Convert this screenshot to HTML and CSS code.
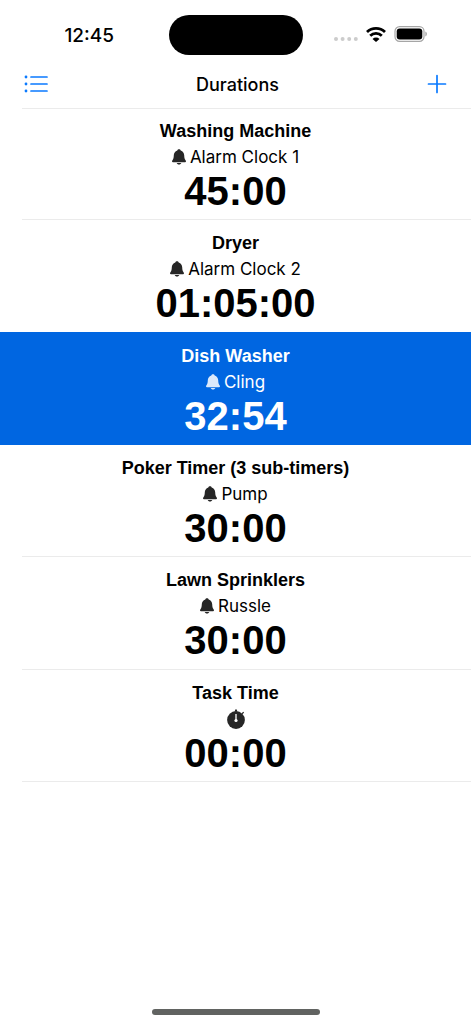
FILE: index.html
```html
<!DOCTYPE html>
<html lang="en">
<head>
<meta charset="utf-8">
<meta name="viewport" content="width=device-width, initial-scale=1">
<title>Durations</title>
<link rel="stylesheet" href="styles.css">
</head>
<body>
<svg class="sprite" aria-hidden="true">
  <symbol id="bell" viewBox="0 0 14 16">
    <path d="M7 .2c.8 0 1.500.5 1.700 1.200C11 2.200 12.100 4 12.200 6.300c.1 2.700.4 3.800 1.300 4.900.3.4.5.8.5 1.100 0 .6-.4.900-1 .9H1c-.6 0-1-.3-1-.9 0-.3.2-.7.500-1.100.9-1.100 1.200-2.200 1.300-4.900C1.900 4 3 2.200 5.300 1.400 5.500.7 6.200.2 7 .2zM4.700 14.100h4.600c-.2.900-1.200 1.500-2.300 1.500s-2.100-.6-2.300-1.500z"/>
  </symbol>
</svg>
<div class="screen">
  <div class="status">
    <time class="clock">12:45</time>
    <div class="island"></div>
    <div class="indicators">
      <svg class="signal" viewBox="0 0 24 4" aria-hidden="true"><circle cx="2" cy="2" r="2"/><circle cx="8.600" cy="2" r="2"/><circle cx="15.200" cy="2" r="2"/><circle cx="21.800" cy="2" r="2"/></svg>
      <svg class="wifi" viewBox="0 0 20 15" aria-hidden="true"><path class="wave" d="M1 5.100a12.900 12.900 0 0 1 18 0M4.200 8.700a8.300 8.300 0 0 1 11.600 0"/><path d="M6.500 11.900a5.100 5.100 0 0 1 7 0L10 15z"/></svg>
      <svg class="battery" viewBox="0 0 34 16" aria-hidden="true"><rect class="case" x="1" y=".7" width="29" height="14.600" rx="4.600"/><rect x="2.700" y="2.400" width="25.600" height="11.200" rx="3"/><path class="tip" d="M31.300 5.600c1 .4 1.600 1.300 1.600 2.400s-.6 2-1.600 2.400z"/></svg>
    </div>
  </div>
  <header class="navbar">
    <button class="icon-button" type="button" aria-label="List">
      <svg class="list-icon" viewBox="0 0 24 18"><g class="dots"><circle cx="2" cy="2" r="1.400"/><circle cx="2" cy="9" r="1.400"/><circle cx="2" cy="16" r="1.400"/></g><path d="M7 2h16M7 9h16M7 16h16"/></svg>
    </button>
    <h1 class="heading">Durations</h1>
    <button class="icon-button" type="button" aria-label="Add">
      <svg class="plus-icon" viewBox="0 0 20 20"><path d="M10 1.500v17M1.500 10h17"/></svg>
    </button>
  </header>
  <main>
    <ul class="timers">
      <li><button class="timer" type="button"><span class="name">Washing Machine</span><span class="sound"><svg class="bell"><use href="#bell"/></svg>Alarm Clock 1</span><span class="duration">45:00</span></button></li>
      <li><button class="timer" type="button"><span class="name">Dryer</span><span class="sound"><svg class="bell"><use href="#bell"/></svg>Alarm Clock 2</span><span class="duration">01:05:00</span></button></li>
      <li class="selected"><button class="timer" type="button" aria-pressed="true"><span class="name">Dish Washer</span><span class="sound"><svg class="bell"><use href="#bell"/></svg>Cling</span><span class="duration">32:54</span></button></li>
      <li><button class="timer" type="button"><span class="name">Poker Timer (3 sub-timers)</span><span class="sound"><svg class="bell"><use href="#bell"/></svg>Pump</span><span class="duration">30:00</span></button></li>
      <li><button class="timer" type="button"><span class="name">Lawn Sprinklers</span><span class="sound"><svg class="bell"><use href="#bell"/></svg>Russle</span><span class="duration">30:00</span></button></li>
      <li><button class="timer" type="button"><span class="name">Task Time</span><span class="sound"><svg class="stopwatch" viewBox="0 0 18 20" aria-label="Stopwatch"><circle cx="9" cy="11" r="8.900"/><path d="M8.200.4h1.600l.5 2.100H7.700zM14.700 4.200l1.500-1.500.9.900-1.500 1.600z"/><path class="hand" d="M9 5v6"/><circle class="hub" cx="9" cy="11.500" r="1.600"/></svg></span><span class="duration">00:00</span></button></li>
    </ul>
  </main>
  <div class="home-indicator"></div>
</div>
</body>
</html>
```

FILE: styles.css
```css
* { box-sizing: border-box; }

body {
  margin: 0;
  background: #fff;
  color: #000;
  font-family: Inter, "Liberation Sans", sans-serif;
}

.sprite { display: none; }

.screen {
  display: flex;
  flex-direction: column;
  min-height: 100vh;
}

.status {
  display: grid;
  grid-template-columns: 1fr 134px 1fr;
  align-items: center;
  height: 60px;
  padding-top: 10px;
}

.clock {
  padding-left: 10px;
  font-size: 19px;
  font-weight: 500;
  text-align: center;
}

.island {
  height: 40px;
  border-radius: 20px;
  background: #000;
}

.indicators {
  display: flex;
  align-items: center;
  justify-content: center;
  gap: 8px;
  padding: 0 12px 2px 0;
}

.signal { width: 24px; height: 4px; margin-top: 10px; fill: #ccc; }
.wifi { width: 20px; height: 15px; }
.wave { fill: none; stroke: #000; stroke-width: 2.8; }
.battery { width: 34px; height: 16px; }
.case { fill: none; stroke: #a6a6a6; stroke-width: 1.2; }
.tip { fill: #a6a6a6; }

.navbar {
  display: flex;
  align-items: center;
  justify-content: space-between;
  height: 48px;
  padding: 0 24px;
}

.icon-button {
  display: flex;
  padding: 0;
  border: 0;
  background: none;
}

.heading {
  margin: 0;
  font-size: 18px;
  font-weight: 500;
}

.list-icon { width: 24px; height: 18px; }
.list-icon path,
.plus-icon path { fill: none; stroke: #0a7aff; stroke-width: 1.7; stroke-linecap: round; }
.dots { fill: #0a7aff; }
.plus-icon { width: 20px; height: 20px; }

.timers {
  display: grid;
  grid-auto-rows: 1fr;
  min-height: 674px;
  margin: 0;
  padding: 0;
  list-style: none;
  background: linear-gradient(#ebebeb, #ebebeb) right top / calc(100% - 22px) 1px no-repeat;
}

.timers li {
  background: linear-gradient(#ebebeb, #ebebeb) right bottom / calc(100% - 22px) 1px no-repeat;
}

.timers .selected {
  background: #0066e1;
  box-shadow: 0 -1px #0066e1;
  color: #fff;
}

.timer {
  display: flex;
  flex-direction: column;
  align-items: center;
  width: 100%;
  padding: 10px 16px 8px;
  border: 0;
  background: none;
  color: inherit;
  font-family: "Liberation Sans", Arial, sans-serif;
}

.name {
  font-size: 18px;
  font-weight: 700;
  line-height: 26px;
}

.sound {
  display: flex;
  align-items: center;
  gap: 4px;
  height: 26px;
  font-family: Inter, sans-serif;
  font-size: 17px;
}

.duration {
  font-size: 40px;
  font-weight: 700;
  line-height: 42px;
}

.bell { width: 14px; height: 16px; fill: #262626; }
.selected .bell { fill: #dce9fb; }
.stopwatch { width: 18px; height: 20px; fill: #262626; }
.hand { stroke: #fff; stroke-width: 1.3; }
.hub { fill: #fff; }

.home-indicator {
  width: 168px;
  height: 6px;
  margin: auto auto 9px;
  border-radius: 3px;
  background: #616361;
}
```
